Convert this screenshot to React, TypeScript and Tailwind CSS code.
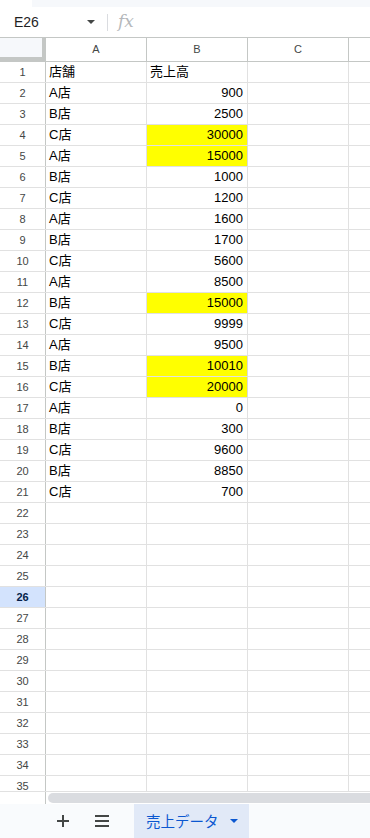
import React from 'react'

const rows: { n: number; a: string; b: string; hl?: boolean }[] = [
  { n: 1, a: '店舗', b: '売上高' },
  { n: 2, a: 'A店', b: '900' },
  { n: 3, a: 'B店', b: '2500' },
  { n: 4, a: 'C店', b: '30000', hl: true },
  { n: 5, a: 'A店', b: '15000', hl: true },
  { n: 6, a: 'B店', b: '1000' },
  { n: 7, a: 'C店', b: '1200' },
  { n: 8, a: 'A店', b: '1600' },
  { n: 9, a: 'B店', b: '1700' },
  { n: 10, a: 'C店', b: '5600' },
  { n: 11, a: 'A店', b: '8500' },
  { n: 12, a: 'B店', b: '15000', hl: true },
  { n: 13, a: 'C店', b: '9999' },
  { n: 14, a: 'A店', b: '9500' },
  { n: 15, a: 'B店', b: '10010', hl: true },
  { n: 16, a: 'C店', b: '20000', hl: true },
  { n: 17, a: 'A店', b: '0' },
  { n: 18, a: 'B店', b: '300' },
  { n: 19, a: 'C店', b: '9600' },
  { n: 20, a: 'B店', b: '8850' },
  { n: 21, a: 'C店', b: '700' },
]

const allRows = Array.from({ length: 35 }, (_, i) => rows[i] ?? { n: i + 1, a: '', b: '' })

const font = { fontFamily: '"Liberation Sans", Arial, "Noto Sans CJK JP", sans-serif' }

export default function App() {
  return (
    <div className="flex h-[838px] w-[370px] flex-col overflow-hidden bg-white text-black" style={font}>
      {/* formula bar */}
      <div className="h-[38px] shrink-0 border-b border-[#c4c7c5]">
        <div className="flex h-[7px]">
          <div className="w-[32px]" />
          <div className="flex-1 bg-[#f6f8fb]" />
        </div>
        <div className="flex h-[30px] items-center">
          <span className="ml-[14px] w-[70px] text-[14px] text-[#1f1f1f]">E26</span>
          <svg width="8" height="4" viewBox="0 0 8 4" className="ml-[3px]">
            <path d="M0 0h8L4 4z" fill="#444746" />
          </svg>
          <div className="ml-[12px] h-[17px] w-px bg-[#dadce0]" />
          <span className="ml-[10px] text-[17px] italic text-[#b5b8bb]" style={{ fontFamily: '"DejaVu Serif", serif' }}>
            fx
          </span>
        </div>
      </div>

      {/* column headers */}
      <div className="flex h-[24px] shrink-0 border-b border-[#c4c7c5] text-[11px] text-[#444746]">
        <div className="w-[46px] shrink-0 border-r-4 border-b-4 border-[#c4c7c5] bg-[#f6f8fb]" />
        {['A', 'B', 'C'].map((c) => (
          <div key={c} className="flex w-[101px] shrink-0 items-center justify-center border-r border-[#c4c7c5]">
            {c}
          </div>
        ))}
        <div className="flex-1" />
      </div>

      {/* grid */}
      <div className="min-h-0 flex-1 overflow-hidden">
        {allRows.map((r) => (
          <div key={r.n} className="flex h-[21px] border-b border-[#e1e1e1] text-[13px]">
            <div
              className={
                r.n === 26
                  ? 'flex w-[46px] shrink-0 items-center justify-center border-r border-[#c4c7c5] bg-[#d3e3fd] text-[11px] font-bold text-[#041e49]'
                  : 'flex w-[46px] shrink-0 items-center justify-center border-r border-[#c4c7c5] text-[11px] text-[#444746]'
              }
            >
              {r.n}
            </div>
            <div className="flex w-[101px] shrink-0 items-center border-r border-[#e1e1e1] pl-[3px]">{r.a}</div>
            <div
              className={
                r.n === 1
                  ? 'flex w-[101px] shrink-0 items-center border-r border-[#e1e1e1] pl-[3px]'
                  : r.hl
                    ? 'flex w-[101px] shrink-0 items-center justify-end border-r border-[#d9d9d9] bg-[#ffff00] pr-[4px]'
                    : 'flex w-[101px] shrink-0 items-center justify-end border-r border-[#e1e1e1] pr-[4px]'
              }
            >
              {r.b}
            </div>
            <div className="w-[101px] shrink-0 border-r border-[#e1e1e1]" />
            <div className="flex-1" />
          </div>
        ))}
      </div>

      {/* horizontal scrollbar */}
      <div className="flex h-[13px] shrink-0 border-t border-[#e1e1e1]">
        <div className="w-[46px] shrink-0 border-r border-[#c4c7c5]" />
        <div className="flex-1 py-px pl-[2px]">
          <div className="h-full rounded-l-full bg-[#dadce0]" />
        </div>
      </div>

      {/* sheet tabs */}
      <div className="flex h-[34px] shrink-0 items-stretch bg-[#f9fbfd]">
        <div className="flex w-[124px] items-center justify-end gap-[26px] pr-[15px]">
          <svg width="12" height="12" viewBox="0 0 12 12">
            <path d="M6 0v12M0 6h12" stroke="#444746" strokeWidth="2" />
          </svg>
          <svg width="14" height="12" viewBox="0 0 14 12">
            <path d="M0 1h14M0 6h14M0 11h14" stroke="#444746" strokeWidth="2" />
          </svg>
        </div>
        <div className="ml-[10px] flex w-[115px] items-center bg-[#e1e9f7] pl-[12px]">
          <span className="text-[14.5px] text-[#0b57d0]" style={{ fontFamily: '"Noto Sans CJK JP", sans-serif' }}>
            売上データ
          </span>
          <svg width="8" height="4" viewBox="0 0 8 4" className="ml-[11px]">
            <path d="M0 0h8L4 4z" fill="#0b57d0" />
          </svg>
        </div>
      </div>
    </div>
  )
}
